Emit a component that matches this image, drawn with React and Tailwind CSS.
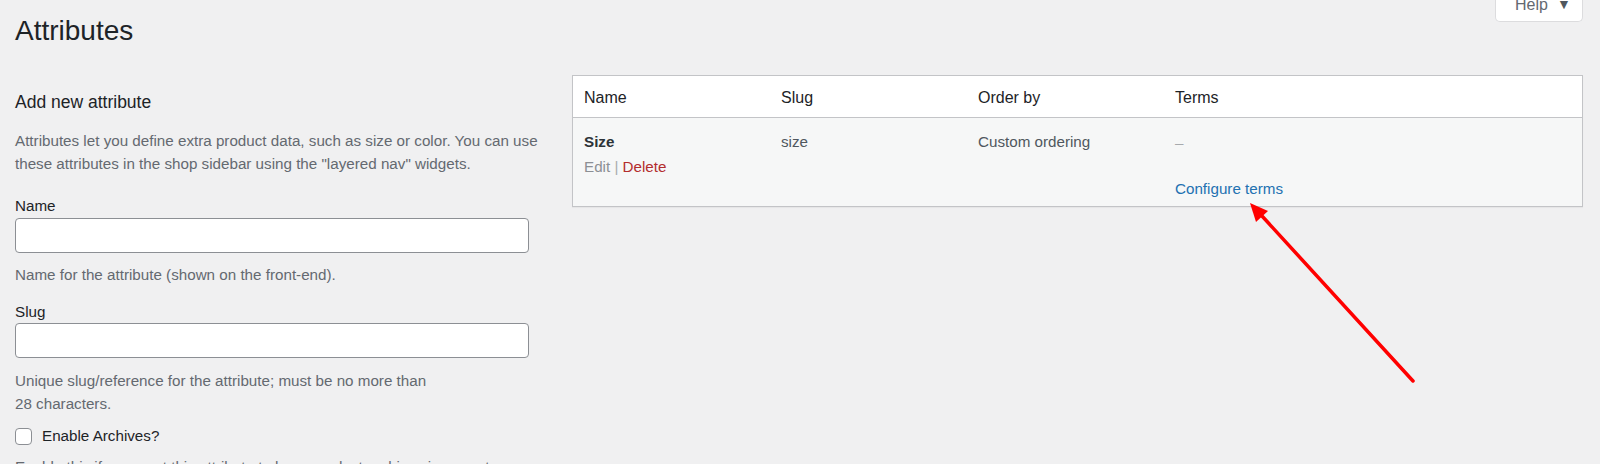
import React from 'react';

function Label({ children, className = '' }) {
  return <div className={`text-[15.2px] leading-[20px] text-[#1d2327] ${className}`}>{children}</div>;
}

function Hint({ children, className = '' }) {
  return <p className={`text-[15.2px] leading-[23px] text-[#646970] whitespace-nowrap ${className}`}>{children}</p>;
}

function TextInput() {
  return <input type="text" className="block w-[514px] h-[35px] bg-white border border-[#8c8f94] rounded-[4px] px-2 outline-none" />;
}

function AddAttributeForm() {
  return (
    <div className="flex-none w-[541px] ml-[15px]">
      <h2 className="mt-[15px] text-[17.5px] leading-[24px] text-[#1d2327] font-normal">Add new attribute</h2>
      <Hint className="mt-[15px]">
        Attributes let you define extra product data, such as size or color. You can use
        <br />
        these attributes in the shop sidebar using the "layered nav" widgets.
      </Hint>

      <Label className="mt-[21px]">Name</Label>
      <div className="mt-[2px]">
        <TextInput />
      </div>
      <Hint className="mt-[10px]">Name for the attribute (shown on the front-end).</Hint>

      <Label className="mt-[16px]">Slug</Label>
      <div className="mt-[1px]">
        <TextInput />
      </div>
      <Hint className="mt-[11px]">
        Unique slug/reference for the attribute; must be no more than
        <br />
        28 characters.
      </Hint>

      <label className="mt-[10px] flex items-center h-[23px]">
        <span className="w-[17px] h-[17px] bg-white border border-[#8c8f94] rounded-[4px] flex-none" />
        <span className="ml-[10px] text-[15.2px] text-[#1d2327]">Enable Archives?</span>
      </label>
      <Hint className="mt-[7px]">Enable this if you want this attribute to have product archives in your store.</Hint>
    </div>
  );
}

function AttributesTable() {
  const cols = 'grid grid-cols-[197px_197px_197px_1fr]';
  return (
    <div className="flex-none ml-[16px] w-[1011px] bg-white border border-[#c3c4c7] shadow-[0_1px_1px_rgba(0,0,0,0.04)]">
      <div className={`${cols} h-[42px] items-center pt-[3px] border-b border-[#c3c4c7] text-[16px] text-[#1d2327]`}>
        <div className="pl-[11px]">Name</div>
        <div className="pl-[11px]">Slug</div>
        <div className="pl-[11px]">Order by</div>
        <div className="pl-[11px]">Terms</div>
      </div>
      <div className={`${cols} h-[88px] bg-[#f6f7f7] text-[15.2px] leading-[23px] text-[#50575e]`}>
        <div className="pl-[11px] pt-[12px]">
          <div className="font-bold text-[#2c3338]">Size</div>
          <div className="mt-[2px]">
            <span className="text-[#8c8f94]">Edit</span>
            <span className="text-[#a7aaad]"> | </span>
            <span className="text-[#b32d2e]">Delete</span>
          </div>
        </div>
        <div className="pl-[11px] pt-[12px]">size</div>
        <div className="pl-[11px] pt-[12px]">Custom ordering</div>
        <div className="pl-[11px] pt-[13px]">
          <div className="text-[#a7aaad]">–</div>
          <div className="mt-[23px] text-[#2271b1]">Configure terms</div>
        </div>
      </div>
    </div>
  );
}

export default function App() {
  return (
    <div className="relative h-[464px] overflow-hidden bg-[#f0f0f1] font-['Liberation_Sans',Arial,sans-serif]">
      <div className="flex justify-between items-start">
        <h1 className="ml-[15px] pt-[13px] text-[28px] leading-[36px] font-normal text-[#1d2327]">Attributes</h1>
        <div className="mr-[17px] w-[88px] h-[22px] bg-white border border-t-0 border-[#dcdcde] rounded-b-[5px] flex items-end pl-[19px] pb-[8px]">
          <span className="text-[16px] leading-none text-[#646970]">Help</span>
          <span className="ml-[9px] text-[14px] leading-none text-[#50575e] pb-[2px]">▼</span>
        </div>
      </div>

      <div className="flex items-start mt-[26px]">
        <AddAttributeForm />
        <AttributesTable />
      </div>

      <svg className="absolute inset-0 pointer-events-none" width="1600" height="464" viewBox="0 0 1600 464">
        <line x1="1413" y1="381" x2="1262" y2="216" stroke="#ff0000" strokeWidth="3.5" strokeLinecap="round" />
        <polygon points="1250,203 1268,211 1256,222" fill="#ff0000" />
      </svg>
    </div>
  );
}
